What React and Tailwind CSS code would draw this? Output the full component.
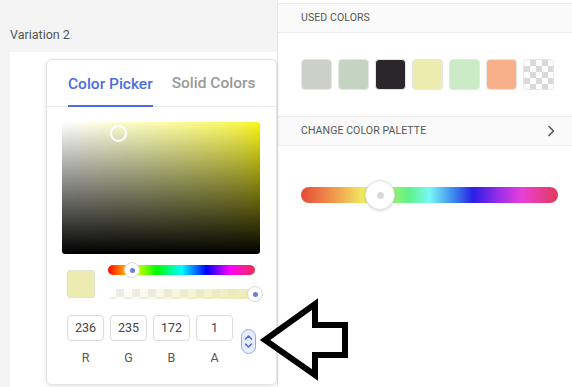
import React from "react";

const swatches = ["#ccd0c8", "#c5d3c3", "#2a2629", "#ecebb0", "#cbeac6", "#f8b08b"];

export default function App() {
  return (
    <div className="relative w-[572px] h-[387px] flex overflow-hidden bg-white font-['Roboto',sans-serif]">
      {/* Left column */}
      <div className="relative w-[277px] shrink-0 bg-[#f4f4f4] flex flex-col">
        <div className="pl-[10px] pt-[28px] text-[12.5px] leading-[14px] text-[#555]">Variation 2</div>
        <div className="mt-[10px] ml-[10px] flex-1 bg-white" />

        {/* Popover */}
        <div className="absolute left-[46px] top-[59px] w-[231px] h-[326px] bg-white rounded-[6px] border border-[#e3e3e3] shadow-[0_1px_4px_rgba(0,0,0,0.12)] flex flex-col">
          <div className="h-[47px] border-b border-[#ebebeb] flex items-end pl-[21px] gap-[19px]">
            <div className="flex flex-col items-stretch">
              <span className="text-[15.5px] leading-[20px] font-medium text-[#4b6de0] pb-[11px]">Color Picker</span>
              <div className="h-[2px] bg-[#4b6de0] mb-[-1px]" />
            </div>
            <span className="text-[15.5px] leading-[20px] font-medium text-[#999] pb-[13px]">Solid Colors</span>
          </div>

          {/* saturation */}
          <div className="relative mt-[15px] ml-[15px] w-[198px] h-[132px] rounded-[3px] overflow-hidden bg-linear-to-r from-white to-[#fbf700]">
            <div className="absolute inset-0 bg-linear-to-t from-black to-transparent" />
            <div className="absolute left-[48px] top-[3px] w-[17px] h-[17px] rounded-full border-2 border-white" />
          </div>

          {/* preview + sliders */}
          <div className="flex mt-[11px]">
            <div className="mt-[5px] ml-[20px] w-[28px] h-[28px] rounded-[3px] bg-[#ecebb0] border border-[#e2e2d0]" />
            <div className="ml-[13px] flex flex-col">
              <div className="relative w-[147px] h-[10px] rounded-full bg-[linear-gradient(to_right,#f00,#ff0_17%,#0f0_33%,#0ff_50%,#00f_67%,#f0f_83%,#f03050)]">
                <div className="absolute left-[16px] top-[-3px] w-[16px] h-[16px] rounded-full bg-white border border-[#d8d8d8] flex items-center justify-center">
                  <div className="w-[5px] h-[5px] rounded-full bg-[#6b7fe0]" />
                </div>
              </div>
              <div className="relative mt-[14px] w-[154px] h-[10px] rounded-full overflow-visible">
                <div className="absolute inset-0 rounded-full bg-[repeating-conic-gradient(#ececec_0_25%,#ffffff_0_50%)] bg-[length:16px_16px]" />
                <div className="absolute inset-0 rounded-full bg-linear-to-r from-transparent to-[#ecebb0]" />
                <div className="absolute left-[139px] top-[-3px] w-[16px] h-[16px] rounded-full bg-white border border-[#d8d8d8] flex items-center justify-center">
                  <div className="w-[5px] h-[5px] rounded-full bg-[#6b7fe0]" />
                </div>
              </div>
            </div>
          </div>

          {/* inputs */}
          <div className="flex ml-[20px] mt-[16px] items-start">
            {[
              ["236", "R"],
              ["235", "G"],
              ["172", "B"],
              ["1", "A"],
            ].map(([v, l]) => (
              <div key={l} className="flex flex-col items-center mr-[6px]">
                <div className="w-[37px] h-[26px] rounded-[4px] border border-[#dcdcdc] flex items-center justify-center text-[12.5px] text-[#444]">
                  {v}
                </div>
                <div className="mt-[10px] text-[12.5px] leading-[14px] text-[#555]">{l}</div>
              </div>
            ))}
            <div className="ml-[2px] mt-[14px] w-[15px] h-[25px] rounded-full bg-[#e8edfd] border border-[#93a6f0] flex flex-col items-center justify-center">
              <svg width="9" height="17" viewBox="0 0 9 17" fill="none" stroke="#4b6de0" strokeWidth="1.6" strokeLinecap="round" strokeLinejoin="round">
                <path d="M1.5 6 L4.5 3 L7.5 6" />
                <path d="M1.5 11 L4.5 14 L7.5 11" />
              </svg>
            </div>
          </div>
        </div>
      </div>

      {/* Right panel */}
      <div className="flex-1 bg-white border-l border-[#e4e4e4] shadow-[-2px_0_4px_rgba(0,0,0,0.04)] flex flex-col">
        <div className="mt-[3px] h-[30px] bg-[#fafafa] border-y border-[#ececec] flex items-center pl-[23px] text-[10.5px] text-[#555] tracking-[0.1px]">
          USED COLORS
        </div>
        <div className="mt-[26px] pl-[23px] flex gap-[6px]">
          {swatches.map((c) => (
            <div key={c} className="w-[31px] h-[31px] rounded-[4px] border border-[#e6e6e6]" style={{ backgroundColor: c }} />
          ))}
          <div className="w-[31px] h-[31px] rounded-[4px] border border-[#e6e6e6] bg-[repeating-conic-gradient(#d9d9d9_0_25%,#ffffff_0_50%)] bg-[length:12px_12px]" />
        </div>
        <div className="mt-[26px] h-[30px] bg-[#fafafa] border-y border-[#ececec] flex items-center justify-between pl-[23px] pr-[17px] text-[10.5px] text-[#555] tracking-[0.1px]">
          <span>CHANGE COLOR PALETTE</span>
          <svg width="8" height="12" viewBox="0 0 8 12" fill="none" stroke="#555" strokeWidth="1.6" strokeLinecap="round" strokeLinejoin="round">
            <path d="M2 1.5 L6.5 6 L2 10.5" />
          </svg>
        </div>
        <div className="relative mt-[41px] ml-[23px] w-[257px] h-[16px] rounded-full bg-[linear-gradient(to_right,#e64a35,#f2a050_14%,#f0e960_24%,#c8ef5e_31%,#5ef28a_42%,#7af8f5_50%,#3a80ee_60%,#2a1ee6_67%,#9b2de8_77%,#e940d8_86%,#e23a58)]">
          <div className="absolute left-[64px] top-[-7px] w-[30px] h-[30px] rounded-full bg-white border border-[#e2e2e2] shadow-[0_1px_3px_rgba(0,0,0,0.15)] flex items-center justify-center">
            <div className="w-[7px] h-[7px] rounded-full bg-[#d9d9d9]" />
          </div>
        </div>
      </div>

      {/* Annotation arrow */}
      <svg className="absolute left-[258px] top-[298px]" width="94" height="84" viewBox="0 0 94 84">
        <polygon
          points="7,42 57,6 57,27 87,27 87,57 57,57 57,77"
          fill="white"
          stroke="black"
          strokeWidth="6"
          strokeLinejoin="miter"
        />
      </svg>
    </div>
  );
}
